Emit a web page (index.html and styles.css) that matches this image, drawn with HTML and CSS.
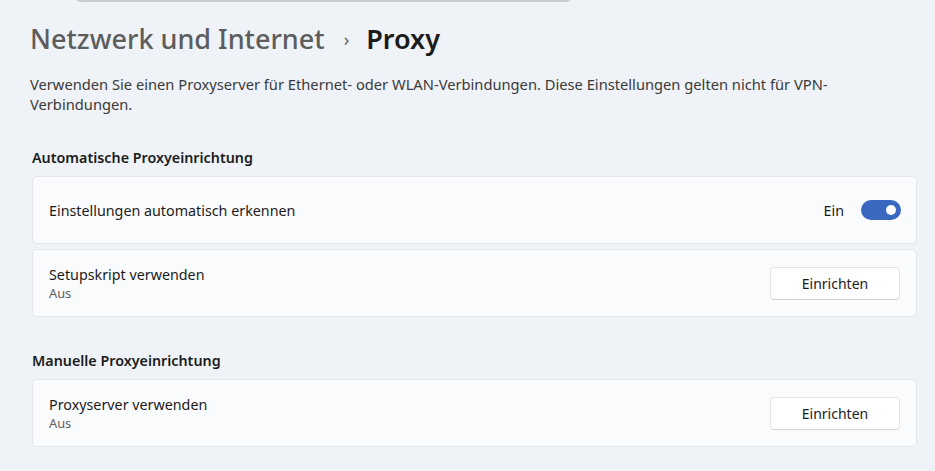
FILE: index.html
```html
<!DOCTYPE html>
<html lang="de">
<head>
<meta charset="utf-8">
<link rel="stylesheet" href="styles.css">
</head>
<body>
<div class="topbar"><div class="search"></div></div>
<main class="page">
  <h1 class="title"><span class="crumb">Netzwerk und Internet</span><span class="sep">›</span><span class="current">Proxy</span></h1>
  <p class="desc">Verwenden Sie einen Proxyserver für Ethernet- oder WLAN-Verbindungen. Diese Einstellungen gelten nicht für VPN-Verbindungen.</p>

  <h2 class="section">Automatische Proxyeinrichtung</h2>
  <div class="card">
    <div class="label"><div class="name">Einstellungen automatisch erkennen</div></div>
    <div class="control"><span class="state">Ein</span><span class="toggle"><span class="knob"></span></span></div>
  </div>
  <div class="card">
    <div class="label"><div class="name">Setupskript verwenden</div><div class="sub">Aus</div></div>
    <div class="control"><button class="btn">Einrichten</button></div>
  </div>

  <h2 class="section second">Manuelle Proxyeinrichtung</h2>
  <div class="card">
    <div class="label"><div class="name">Proxyserver verwenden</div><div class="sub">Aus</div></div>
    <div class="control"><button class="btn">Einrichten</button></div>
  </div>
</main>
</body>
</html>
```
FILE: styles.css
```css
* { box-sizing: border-box; }
html, body { margin: 0; padding: 0; }
body {
  background: #eff2f7;
  font-family: "Noto Sans", "Open Sans", sans-serif;
  color: #1b1b1b;
  width: 935px;
  height: 471px;
  overflow: hidden;
}
.topbar {
  height: 2px;
  display: flex;
  align-items: flex-end;
  padding-left: 75px;
}
.search {
  flex: none;
  width: 497px;
  height: 32px;
  background: #f9fafc;
  border: 1px solid #e3e5e8;
  border-bottom: 2px solid #c8cbd0;
  border-radius: 6px;
}
.page { padding: 0 18px 0 32px; }
.title {
  margin: 15px 0 0 -2px;
  font-size: 27px;
  font-weight: 600;
  line-height: 44px;
  display: flex;
  align-items: center;
}
.crumb { color: #5d5d5d; font-weight: 500; }
.sep { color: #5d5d5d; font-size: 18px; font-weight: 400; margin: 0 17px 0 19px; }
.current { color: #1b1b1b; }
.desc {
  margin: 13px 0 0 -2px;
  font-size: 14.7px;
  line-height: 20px;
  color: #3a3a3a;
  width: 830px;
}
.section {
  margin: 34px 0 0 0;
  font-size: 14.3px;
  font-weight: 600;
  line-height: 20px;
  height: 28px;
}
.section.second { margin-top: 34px; }
.card {
  height: 68px;
  background: #fafbfd;
  border: 1px solid #e4e6ea;
  border-radius: 5px;
  margin-bottom: 5px;
  display: flex;
  align-items: center;
  justify-content: space-between;
  padding: 0 15px 0 16px;
}
.label { padding-top: 1px; }
.name { font-size: 14.3px; line-height: 19px; color: #1b1b1b; }
.sub { font-size: 12.8px; line-height: 18px; color: #616161; }
.control { display: flex; align-items: center; }
.state { font-size: 14.3px; margin-right: 17px; color: #1b1b1b; }
.toggle {
  width: 40px;
  height: 20px;
  border-radius: 10px;
  background: #3a68c0;
  position: relative;
}
.knob {
  position: absolute;
  right: 5px;
  top: 5px;
  width: 10px;
  height: 10px;
  border-radius: 50%;
  background: #ffffff;
}
.btn {
  width: 130px;
  height: 33px;
  margin-right: 1px;
  background: #ffffff;
  border: 1px solid #e3e4e7;
  border-bottom-color: #d2d3d6;
  border-radius: 4px;
  font-family: inherit;
  font-size: 14px;
  color: #1b1b1b;
}
```
